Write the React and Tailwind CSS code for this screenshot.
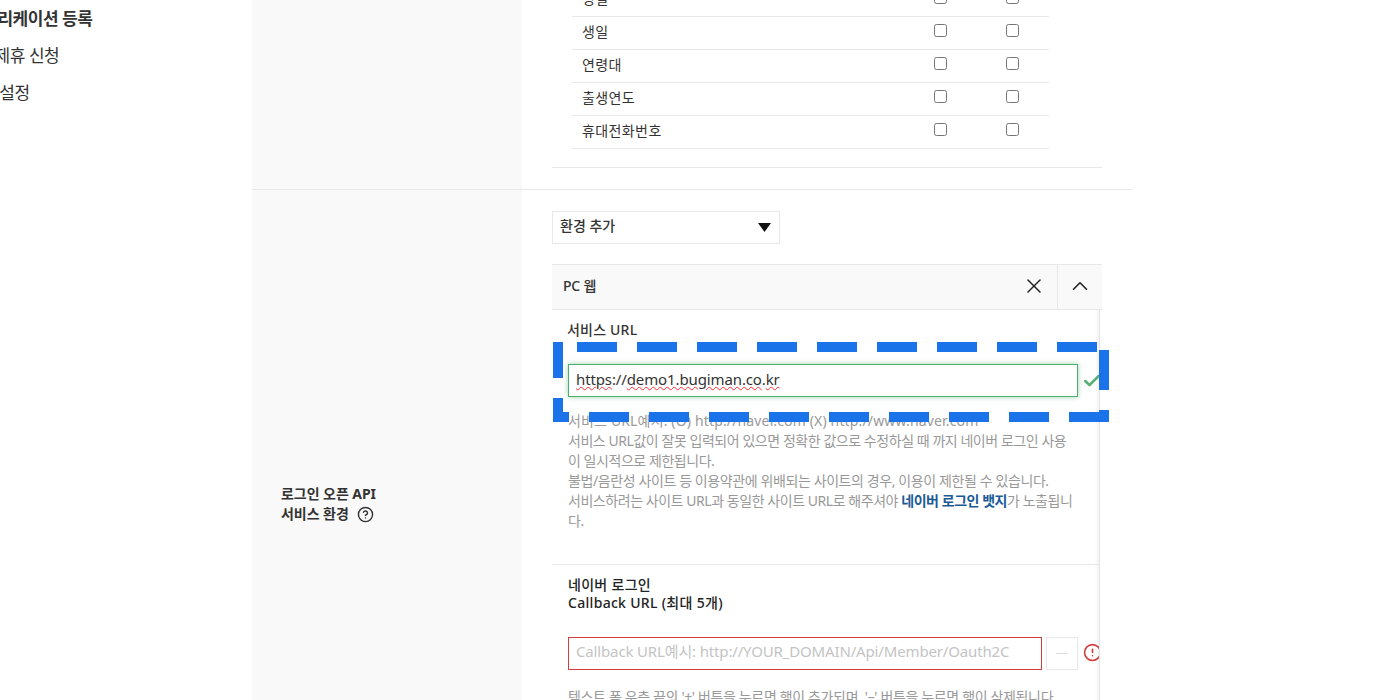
import React from "react";
import { X, ChevronUp, Check, CircleHelp, CircleAlert } from "lucide-react";

const rows = ["성별", "생일", "연령대", "출생연도", "휴대전화번호"];

const FONT = "font-['Noto_Sans','Noto_Sans_CJK_KR',sans-serif]";

export default function App() {
  return (
    <div className={`relative h-[700px] overflow-hidden bg-white text-[14px] tracking-[-0.45px] text-[#333] ${FONT}`}>
      <div className="flex -mt-[16px]">
        {/* 왼쪽 메뉴 */}
        <aside className="w-[252px] shrink-0 overflow-hidden pt-[16px] text-[17px] leading-[37px] text-[#333] whitespace-nowrap">
          <div className="-ml-[33px] font-bold">애플리케이션 등록</div>
          <div className="-ml-[55px]">네이버 제휴 신청</div>
          <div className="-ml-[35px]">환경 설정</div>
        </aside>

        <main className="w-[880px] shrink-0">
          {/* 권한 */}
          <section className="flex border-b border-[#e8e8e8]">
            <div className="w-[270px] shrink-0 bg-[#f9f9f9]" />
            <div className="flex-1 pl-[30px] pr-[30px]">
              <div className="border-b border-[#e8e8e8] pl-[20px] pr-[53px] pb-[18px]">
                {rows.map((r) => (
                  <div key={r} className="flex h-[33px] items-center border-b border-[#e8e8e8] pl-[10px]">
                    <span className="flex-1 pb-[4px] tracking-[0.4px]">{r}</span>
                    <input type="checkbox" className="mb-[5px] mr-[59px] h-[13px] w-[13px]" />
                    <input type="checkbox" className="mb-[5px] mr-[30px] h-[13px] w-[13px]" />
                  </div>
                ))}
              </div>
              <div className="h-[21px]" />
            </div>
          </section>

          {/* 서비스 환경 */}
          <section className="flex h-[628px]">
            <div className="flex w-[270px] shrink-0 items-center bg-[#f9f9f9] pl-[29px] font-bold text-[14px] leading-[20px] tracking-[-0.05px]">
              <div>
                로그인 오픈 API
                <br />
                <span className="inline-flex items-center gap-[8px]">
                  서비스 환경 <CircleHelp size={17} strokeWidth={2} />
                </span>
              </div>
            </div>
            <div className="flex-1 px-[30px] pt-[21px]">
              <div className="flex h-[33px] w-[228px] items-center justify-between border border-[#e8e8e8] pl-[7px] pr-[8px] font-medium tracking-[0px]">
                <span className="pb-[4px]">환경 추가</span>
                <svg width="13" height="9" viewBox="0 0 13 9">
                  <polygon points="0,0 13,0 6.5,9" fill="#111" />
                </svg>
              </div>

              <div className="mt-[20px] w-[550px]">
                <div className="flex h-[46px] items-center border-y border-[#e8e8e8] bg-[#f9f9f9]">
                  <span className="flex-1 pb-[4px] pl-[11px] font-medium tracking-[-0.2px]">PC 웹</span>
                  <span className="flex w-[46px] justify-center pb-[3px]">
                    <X size={24} strokeWidth={1.5} color="#222" />
                  </span>
                  <span className="flex h-full w-[45px] items-center justify-center border-l border-[#e8e8e8] pb-[3px]">
                    <ChevronUp size={26} strokeWidth={1.5} color="#222" />
                  </span>
                </div>

                <div className="w-[548px] overflow-hidden border-r border-[#e4e4e4] shadow-[inset_-4px_0_4px_-3px_rgba(0,0,0,0.08)]">
                  <div className="border-b border-[#e8e8e8] pl-[16px] pb-[33px]">
                    <div className="-ml-px pt-[10px] font-medium leading-[20px] tracking-[0.2px]">서비스 URL</div>
                    <div className="mt-[24px] flex items-center">
                      <div className="flex h-[33px] w-[510px] shrink-0 items-center border border-[#4caf6f] pb-[2px] pl-[7px] text-[15px] tracking-[-0.12px] shadow-[0_0_5px_rgba(76,175,111,0.55)]">
                        <span className="underline decoration-wavy decoration-red-500 decoration-1">https</span>
                        <span>://</span>
                        <span className="underline decoration-wavy decoration-red-500 decoration-1">demo1.bugiman.co</span>
                        <span>.</span>
                        <span className="underline decoration-wavy decoration-red-500 decoration-1">kr</span>
                      </div>
                      <Check size={20} strokeWidth={3} color="#55b06f" className="ml-[4px] shrink-0" />
                    </div>
                    <p className="mt-[14px] whitespace-nowrap leading-[20px] text-[#999]">
                      <span className="tracking-[0.15px]">서비스 URL예시: (O) http://naver.com (X) http://www.naver.com</span>
                      <br />
                      서비스 URL값이 잘못 입력되어 있으면 정확한 값으로 수정하실 때 까지 네이버 로그인 사용
                      <br />
                      이 일시적으로 제한됩니다.
                      <br />
                      <span className="tracking-[-0.4px]">불법/음란성 사이트 등 이용약관에 위배되는 사이트의 경우, 이용이 제한될 수 있습니다.</span>
                      <br />
                      서비스하려는 사이트 URL과 동일한 사이트 URL로 해주셔야{" "}
                      <b className="text-[#1a5a96]">네이버 로그인 뱃지</b>가 노출됩니
                      <br />
                      다.
                    </p>
                  </div>

                  <div className="pl-[16px]">
                    <div className="pt-[11px] font-medium leading-[18px] tracking-[0.3px] text-[#222]">
                      네이버 로그인
                      <br />
                      Callback URL (최대 5개)
                    </div>
                    <div className="mt-[25px] flex items-center">
                      <input
                        readOnly
                        placeholder="Callback URL예시: http://YOUR_DOMAIN/Api/Member/Oauth2ClientCallback"
                        className="h-[33px] w-[474px] shrink-0 border border-[#d23c3c] pb-[6px] pl-[7px] pr-[32px] text-[15px] tracking-[-0.15px] outline-none placeholder:text-[#c4c4c4]"
                      />
                      <span className="ml-[4px] flex h-[33px] w-[32px] shrink-0 items-center justify-center border border-[#e8e8e8]">
                        <span className="h-[1.5px] w-[12px] bg-[#ddd]" />
                      </span>
                      <CircleAlert size={19} strokeWidth={2} color="#d23c3c" className="mb-[2px] ml-[5px] shrink-0" />
                    </div>
                    <p className="mt-[16px] whitespace-nowrap tracking-[-0.35px] text-[#999]">
                      텍스트 폼 우측 끝의 '+' 버튼을 누르면 행이 추가되며, '–' 버튼을 누르면 행이 삭제됩니다.
                    </p>
                  </div>
                </div>
              </div>
            </div>
          </section>
        </main>
      </div>

      {/* 강조 표시 점선 */}
      <svg className="absolute left-[550px] top-[340px]" width="562" height="84" viewBox="0 0 562 84" fill="none" stroke="#1a73e8" strokeWidth="10">
        <line x1="27" y1="7" x2="547" y2="7" strokeDasharray="40 20" />
        <line x1="8" y1="2" x2="8" y2="38" />
        <line x1="8" y1="58" x2="8" y2="82" />
        <line x1="3" y1="77" x2="19" y2="77" />
        <line x1="39" y1="77" x2="559" y2="77" strokeDasharray="40 20" />
        <line x1="554" y1="10" x2="554" y2="50" />
        <line x1="554" y1="70" x2="554" y2="82" />
      </svg>
    </div>
  );
}
